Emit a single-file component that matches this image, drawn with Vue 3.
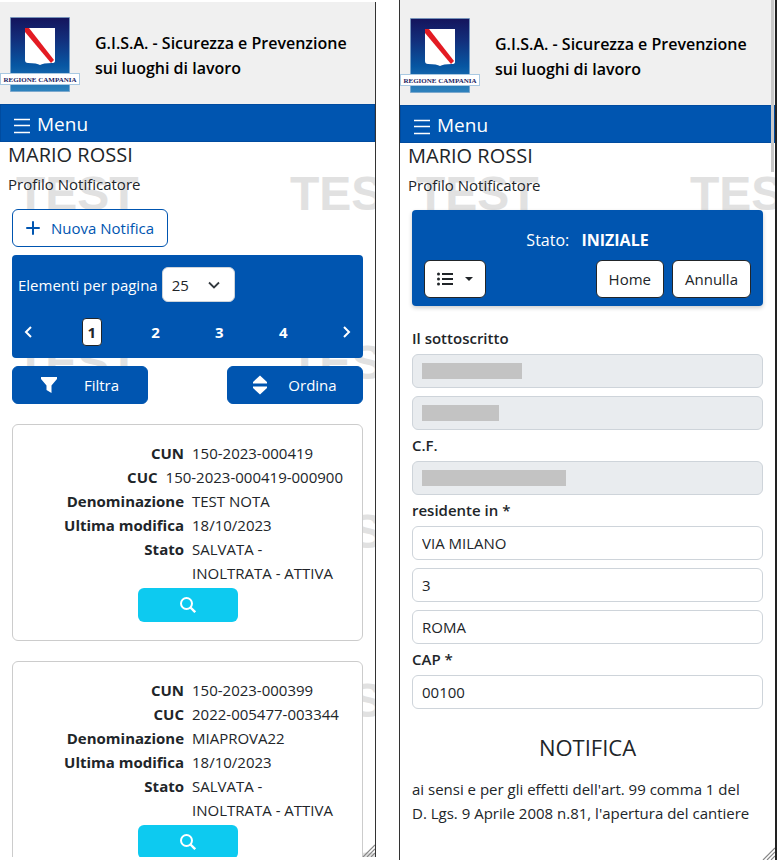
<script setup>
import { ref } from 'vue'

const pageSize = ref('25')
const currentPage = ref(1)
const pages = [1, 2, 3, 4]
const markCount = { list: 10, form: 2 }

const notices = [
  {
    id: 1,
    rows: [
      { label: 'CUN', value: '150-2023-000419', code: true },
      { label: 'CUC', value: '150-2023-000419-000900', code: true },
      { label: 'Denominazione', value: 'TEST NOTA' },
      { label: 'Ultima modifica', value: '18/10/2023' },
      { label: 'Stato', value: 'SALVATA - INOLTRATA - ATTIVA' }
    ]
  },
  {
    id: 2,
    rows: [
      { label: 'CUN', value: '150-2023-000399', code: true },
      { label: 'CUC', value: '2022-005477-003344', code: true },
      { label: 'Denominazione', value: 'MIAPROVA22' },
      { label: 'Ultima modifica', value: '18/10/2023' },
      { label: 'Stato', value: 'SALVATA - INOLTRATA - ATTIVA' }
    ]
  }
]

const groups = ref([
  { id: 'nome', label: 'Il sottoscritto', fields: [{ masked: 100 }, { masked: 77 }] },
  { id: 'cf', label: 'C.F.', fields: [{ masked: 144 }] },
  { id: 'residenza', label: 'residente in *', fields: [{ value: 'VIA MILANO' }, { value: '3' }, { value: 'ROMA' }] },
  { id: 'cap', label: 'CAP *', fields: [{ value: '00100' }] }
])
</script>

<template>
  <div class="screens">
    <section v-for="side in ['list', 'form']" :key="side" class="panel" :class="side">
      <div class="watermark" aria-hidden="true">
        <span v-for="m in markCount[side]" :key="m">TEST</span>
      </div>

      <header class="brand">
        <svg class="logo" viewBox="0 0 80 75" role="img" aria-label="Regione Campania">
          <defs>
            <linearGradient :id="'sky-' + side" x1="0" y1="0" x2="0" y2="1">
              <stop offset="0" stop-color="#14145c" />
              <stop offset="0.3" stop-color="#122f7c" />
              <stop offset="0.65" stop-color="#0757a3" />
              <stop offset="1" stop-color="#2f83bd" />
            </linearGradient>
          </defs>
          <rect x="10.5" y="0.5" width="59" height="74" :fill="'url(#sky-' + side + ')'" stroke="#6f9fc8" stroke-opacity="0.6" />
          <path d="M25 11H55V44Q55 46 52 46Q43 46 40 48Q37 46 28 46Q25 46 25 43Z" fill="#fff" />
          <path d="M25 11H29L54 43L51 46L25 15Z" fill="#e31b23" />
          <rect x="0.5" y="56.5" width="79" height="11" fill="#fff" stroke="#a9c9e2" />
          <text x="40" y="65" text-anchor="middle" class="logo-text">REGIONE CAMPANIA</text>
        </svg>
        <h1>G.I.S.A. - Sicurezza e Prevenzione sui luoghi di lavoro</h1>
      </header>

      <nav class="menu">
        <button type="button">
          <svg viewBox="0 0 16 16" width="16" height="16" aria-hidden="true">
            <path d="M0 1.5H16M0 7.5H16M0 14.5H16" stroke="#fff" stroke-width="1.4" />
          </svg>
          Menu
        </button>
      </nav>

      <div class="user">
        <h2>MARIO ROSSI</h2>
        <p>Profilo Notificatore</p>
      </div>

      <main v-if="side === 'list'" class="list-body">
        <button type="button" class="btn outline">
          <svg viewBox="0 0 14 14" width="14" height="14" aria-hidden="true">
            <path d="M7 1V13M1 7H13" stroke="currentColor" stroke-width="2" stroke-linecap="round" />
          </svg>
          Nuova Notifica
        </button>

        <div class="pager">
          <div class="size">
            <label for="page-size">Elementi per pagina</label>
            <select id="page-size" v-model="pageSize">
              <option>10</option>
              <option>25</option>
              <option>50</option>
            </select>
          </div>
          <div class="pages">
            <button type="button" aria-label="Pagina precedente">
              <svg viewBox="0 0 9 14" width="9" height="14" aria-hidden="true">
                <path d="M7 2L2 7L7 12" fill="none" stroke="#fff" stroke-width="2" />
              </svg>
            </button>
            <button v-for="p in pages" :key="p" type="button" :class="{ current: p === currentPage }" @click="currentPage = p">{{ p }}</button>
            <button type="button" aria-label="Pagina successiva">
              <svg viewBox="0 0 9 14" width="9" height="14" aria-hidden="true">
                <path d="M2 2L7 7L2 12" fill="none" stroke="#fff" stroke-width="2" />
              </svg>
            </button>
          </div>
        </div>

        <div class="tools">
          <button type="button" class="btn solid">
            <svg viewBox="0 0 16 16" width="16" height="16" aria-hidden="true">
              <path d="M0 0H16V2L10.5 8.5V16L5.5 13V8.5L0 2Z" fill="#fff" />
            </svg>
            Filtra
          </button>
          <button type="button" class="btn solid">
            <svg viewBox="0 0 14 20" width="14" height="20" aria-hidden="true">
              <path d="M7 0.5L14 7V8.5H0V7ZM0 11.5H14V13L7 19.5L0 13Z" fill="#fff" />
            </svg>
            Ordina
          </button>
        </div>

        <article v-for="n in notices" :key="n.id" class="card">
          <dl>
            <div v-for="r in n.rows" :key="r.label" class="row">
              <dt>{{ r.label }}</dt>
              <dd :class="{ code: r.code }">{{ r.value }}</dd>
            </div>
          </dl>
          <button type="button" class="search" aria-label="Dettaglio">
            <svg viewBox="0 0 16 16" width="16" height="16" aria-hidden="true">
              <circle cx="6.5" cy="6.5" r="5.5" fill="none" stroke="#fff" stroke-width="2" />
              <path d="M10.5 10.5L15.2 15.2" stroke="#fff" stroke-width="2.4" />
            </svg>
          </button>
        </article>
      </main>

      <main v-else class="form-body">
        <div class="status">
          <p>Stato: <strong>INIZIALE</strong></p>
          <div class="actions">
            <button type="button" class="btn light options" aria-label="Opzioni">
              <svg viewBox="0 0 16 14" width="16" height="14" aria-hidden="true">
                <path d="M5 2H16M5 7H16M5 12H16" stroke="#212529" stroke-width="2" />
                <circle cx="1.5" cy="2" r="1.5" fill="#212529" />
                <circle cx="1.5" cy="7" r="1.5" fill="#212529" />
                <circle cx="1.5" cy="12" r="1.5" fill="#212529" />
              </svg>
              <svg viewBox="0 0 8 4" width="8" height="4" aria-hidden="true">
                <path d="M0 0H8L4 4Z" fill="#212529" />
              </svg>
            </button>
            <button type="button" class="btn light">Home</button>
            <button type="button" class="btn light">Annulla</button>
          </div>
        </div>

        <form @submit.prevent>
          <div v-for="g in groups" :key="g.id" class="group">
            <label :for="g.id + '-0'">{{ g.label }}</label>
            <div v-for="(f, i) in g.fields" :key="i" class="field">
              <input v-if="f.masked" :id="g.id + '-' + i" type="text" readonly class="locked" :aria-label="g.label" />
              <input v-else :id="g.id + '-' + i" v-model="f.value" type="text" :aria-label="g.label" />
              <span v-if="f.masked" class="mask" :style="{ width: f.masked + 'px' }"></span>
            </div>
          </div>
        </form>

        <h3>NOTIFICA</h3>
        <p class="legal">ai sensi e per gli effetti dell'art. 99 comma 1 del D. Lgs. 9 Aprile 2008 n.81, l'apertura del cantiere</p>
      </main>

      <span v-if="side === 'form'" class="scroll-thumb"></span>
      <svg class="grip" viewBox="0 0 14 14" width="14" height="14" aria-hidden="true">
        <path d="M2 14L14 2M6 14L14 6M10 14L14 10" stroke="#888" stroke-width="1.2" />
      </svg>
    </section>
  </div>
</template>

<style>
body {
  margin: 0;
  background: #fff;
}
</style>

<style scoped>
* {
  box-sizing: border-box;
}

.screens {
  display: grid;
  grid-template-columns: 376fr 378fr;
  column-gap: 23px;
  height: 100vh;
  overflow: hidden;
  font-family: "Open Sans", "Noto Sans", sans-serif;
  font-size: 15px;
  line-height: 24px;
  color: #212529;
}

button,
input,
select {
  font: inherit;
  color: inherit;
}

button {
  cursor: pointer;
}

h1,
h2,
h3,
p,
dl,
dd {
  margin: 0;
}

.panel {
  position: relative;
  z-index: 0;
  overflow: hidden;
  min-width: 0;
}

.list {
  margin: 2px 0 3px;
  border-right: 1px solid #333;
}

.form {
  border-left: 1px solid #333;
  border-right: 2px solid #222;
}

.watermark {
  position: absolute;
  z-index: -1;
  top: 165px;
  left: 16px;
  display: grid;
  grid-template-columns: 274px 274px;
  grid-auto-rows: 169px;
  font: bold 48px/54px "Liberation Sans", Arial, sans-serif;
  color: #e1e1e1;
}

.form .watermark {
  top: 167px;
}

.brand {
  display: flex;
  align-items: flex-start;
  gap: 15px;
  padding: 15px 16px 12px 0;
  background: #f0f0f0;
}

.form .brand {
  padding-top: 18px;
}

.logo {
  flex: none;
  width: 80px;
  height: 75px;
}

.logo-text {
  font: bold 7px "Liberation Serif", serif;
  fill: #1b1b5e;
}

h1 {
  padding-top: 14px;
  font-size: 16px;
  line-height: 25px;
  font-weight: 600;
  color: #000;
}

.menu {
  background: #0055b0;
  border: 1px solid #004b9f;
}

.menu button {
  display: flex;
  align-items: center;
  gap: 7px;
  height: 36px;
  padding: 2px 13px 0;
  border: 0;
  background: none;
  color: #fff;
  font-size: 19px;
}

.menu svg {
  margin-top: 4px;
}

.user {
  padding: 0 8px;
}

h2 {
  font-size: 20px;
  line-height: 26px;
  font-weight: 400;
}

.user p {
  padding: 4px 0 13px;
}

.list-body {
  padding: 0 12px;
}

.btn {
  display: inline-flex;
  align-items: center;
  justify-content: center;
  height: 38px;
  padding: 0 12px;
  border: 1px solid #0055b0;
  border-radius: 6px;
}

.outline {
  gap: 11px;
  padding: 0 13px;
  background: #fff;
  color: #0055b0;
}

.pager {
  margin: 8px 0;
  padding: 12px 6px;
  border-radius: 4px;
  background: #0055b0;
  color: #fff;
}

.list-body > .btn {
  display: flex;
}

.size {
  display: flex;
  align-items: center;
  gap: 4px;
}

select {
  width: 73px;
  height: 35px;
  padding: 0 9px;
  border: 1px solid #ced4da;
  border-radius: 6px;
  color: #212529;
  appearance: none;
  background: #fff url("data:image/svg+xml,%3Csvg xmlns='http://www.w3.org/2000/svg' viewBox='0 0 12 8'%3E%3Cpath d='M1 1.5L6 6.5L11 1.5' fill='none' stroke='%23343a40' stroke-width='1.8'/%3E%3C/svg%3E") no-repeat right 14px center / 12px 8px;
}

.pages {
  display: flex;
  align-items: center;
  justify-content: space-between;
  padding: 16px 0 0;
}

.pages button {
  display: flex;
  align-items: center;
  justify-content: center;
  width: 20px;
  height: 28px;
  padding: 0;
  border: 1px solid transparent;
  border-radius: 4px;
  background: none;
  color: #fff;
  font-weight: 700;
}

.pages .current {
  background: #fff;
  border-color: #212529;
  color: #212529;
}

.tools {
  display: flex;
  justify-content: space-between;
}

.solid {
  gap: 27px;
  width: 136px;
  background: #0055b0;
  color: #fff;
}

.tools .btn + .btn {
  gap: 21px;
}

.card {
  margin-top: 20px;
  padding: 16px 15px 18px;
  border: 1px solid #ccc;
  border-radius: 6px;
  background: #fff;
}

.row {
  display: flex;
  gap: 8px;
}

dt {
  flex: 1;
  text-align: right;
  font-weight: 700;
}

dd {
  flex: none;
  width: min-content;
  min-width: 155px;
  padding-right: 4px;
}

.code {
  white-space: nowrap;
}

.search {
  display: flex;
  align-items: center;
  justify-content: center;
  width: 100px;
  height: 34px;
  margin: 3px auto 0;
  border: 0;
  border-radius: 6px;
  background: #0dcaf0;
}

.form-body {
  padding: 0 12px;
  min-height: 100%;
  background: #fff;
}

.status {
  padding: 18px 12px 8px;
  border-radius: 4px;
  background: #0055b0;
  color: #fff;
  box-shadow: 0 2px 4px rgba(0, 0, 0, 0.2);
}

.status p {
  font-size: 16px;
  text-align: center;
}

.status strong {
  margin-left: 8px;
}

.actions {
  display: flex;
  gap: 8px;
  padding-top: 8px;
}

.light {
  border-color: #212529;
  background: #fff;
  color: #212529;
}

.options {
  gap: 12px;
  margin-right: auto;
}

form {
  padding-top: 17px;
}

.group label {
  display: block;
  padding: 3px 0 4px;
  font-weight: 600;
}

.field {
  position: relative;
}

.field + .field {
  margin-top: 8px;
}

input {
  display: block;
  width: 100%;
  height: 34px;
  padding: 0 9px;
  border: 1px solid #ced4da;
  border-radius: 6px;
  background: #fff;
}

.locked {
  background: #e9ecef;
}

.mask {
  position: absolute;
  top: 9px;
  left: 10px;
  height: 16px;
  background: #c3c3c3;
}

h3 {
  padding: 23px 0 15px;
  font-size: 22px;
  line-height: 30px;
  font-weight: 400;
  text-align: center;
}

.legal {
  padding-right: 8px;
}

.scroll-thumb {
  position: absolute;
  top: 0;
  right: 1px;
  width: 3px;
  height: 172px;
  background: #c8c8c8;
}

.grip {
  position: absolute;
  right: 0;
  bottom: 0;
}
</style>
